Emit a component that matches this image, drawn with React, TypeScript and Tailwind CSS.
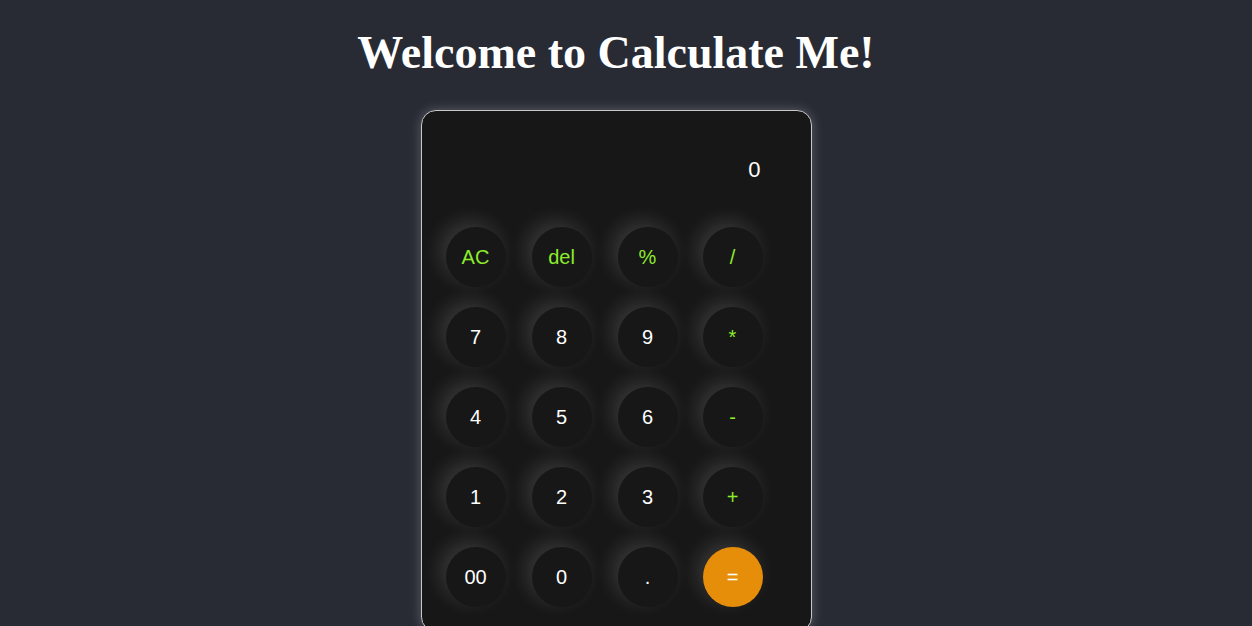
import React from "react";

type Btn = { label: string; kind: "op" | "num" | "eq" };

const rows: Btn[][] = [
  [
    { label: "AC", kind: "op" },
    { label: "del", kind: "op" },
    { label: "%", kind: "op" },
    { label: "/", kind: "op" },
  ],
  [
    { label: "7", kind: "num" },
    { label: "8", kind: "num" },
    { label: "9", kind: "num" },
    { label: "*", kind: "op" },
  ],
  [
    { label: "4", kind: "num" },
    { label: "5", kind: "num" },
    { label: "6", kind: "num" },
    { label: "-", kind: "op" },
  ],
  [
    { label: "1", kind: "num" },
    { label: "2", kind: "num" },
    { label: "3", kind: "num" },
    { label: "+", kind: "op" },
  ],
  [
    { label: "00", kind: "num" },
    { label: "0", kind: "num" },
    { label: ".", kind: "num" },
    { label: "=", kind: "eq" },
  ],
];

export default function App() {
  return (
    <div className="min-h-screen bg-[#282b34] overflow-hidden pr-[20px] flex flex-col items-center">
      <h1
        className="mt-[27px] text-[46px] font-bold text-white leading-[51px]"
        style={{ fontFamily: '"Liberation Serif", "Times New Roman", serif' }}
      >
        Welcome to Calculate Me!
      </h1>
      <div
        className="mt-[32px] w-[391px] h-[522px] shrink-0 rounded-[15px] border border-[#c8c8c8] bg-[#171717] pl-[24px] pt-[24px] shadow-[0_0_12px_rgba(255,255,255,0.25)]"
        style={{ fontFamily: '"Liberation Sans", Arial, sans-serif' }}
      >
        <div className="w-[318px] h-[72px] mb-[20px] flex items-center justify-end pb-[4px] pr-[3px] text-[22px] text-white">
          0
        </div>
        <div className="flex flex-col gap-[20px]">
          {rows.map((row, i) => (
            <div key={i} className="flex gap-[26px]">
              {row.map((b, j) => (
                <button
                  key={b.label}
                  className={
                    "w-[60px] h-[60px] rounded-full flex items-center justify-center text-[20px] shadow-[-6px_-6px_20px_rgba(255,255,255,0.14)] " +
                    (j === 3 ? "-ml-[1px] " : "") +
                    (b.kind === "eq"
                      ? "bg-[#e68e09] text-white"
                      : b.kind === "op"
                      ? "bg-[#171717] text-[#8cec2a]"
                      : "bg-[#171717] text-white")
                  }
                >
                  {b.label}
                </button>
              ))}
            </div>
          ))}
        </div>
      </div>
    </div>
  );
}
